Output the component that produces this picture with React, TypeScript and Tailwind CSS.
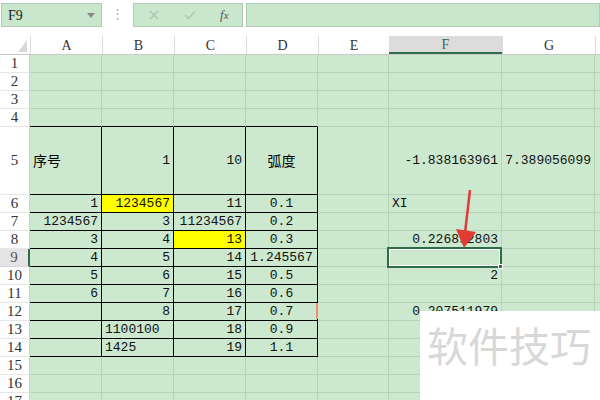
import React from 'react';

type Cell = { t?: string; a?: 'l' | 'r' | 'c'; y?: boolean; zh?: boolean };

const colW = ['w-[72px]', 'w-[72px]', 'w-[72px]', 'w-[72px]', 'w-[71px]', 'w-[113px]', 'w-[93px]', 'flex-1'];
const letters = ['A', 'B', 'C', 'D', 'E', 'F', 'G', ''];

const R = (t: string): Cell => ({ t, a: 'r' });
const L = (t: string): Cell => ({ t, a: 'l' });
const C = (t: string): Cell => ({ t, a: 'c' });

// row number -> cells A..H
const data: Record<number, Cell[]> = {
  5: [{ t: '序号', a: 'l', zh: true }, R('1'), R('10'), { t: '弧度', a: 'c', zh: true }, {}, R('-1.838163961'), R('7.389056099')],
  6: [R('1'), { t: '1234567', a: 'r', y: true }, R('11'), C('0.1'), {}, L('XI')],
  7: [R('1234567'), R('3'), R('11234567'), C('0.2')],
  8: [R('3'), R('4'), { t: '13', a: 'r', y: true }, C('0.3'), {}, R('0.226892803')],
  9: [R('4'), R('5'), R('14'), C('1.245567')],
  10: [R('5'), R('6'), R('15'), C('0.5'), {}, R('2')],
  11: [R('6'), R('7'), R('16'), C('0.6')],
  12: [{}, R('8'), R('17'), C('0.7'), {}, R('0.207511979')],
  13: [{}, L('1100100'), R('18'), C('0.9')],
  14: [{}, L('1425'), R('19'), C('1.1')],
};

function SheetCell({ row, col, cell }: { row: number; col: number; cell?: Cell }) {
  const inTable = row >= 5 && row <= 14 && col <= 3;
  const blackBottom = inTable || (row === 4 && col <= 3);
  const rightCls = inTable ? 'border-r-black' : 'border-r-[#b4d4b8]';
  const bottomCls = blackBottom ? 'border-b-black' : 'border-b-[#b4d4b8]';
  const align = cell?.a === 'r' ? 'justify-end' : cell?.a === 'c' ? 'justify-center' : 'justify-start';
  const bg = cell?.y ? 'bg-[#ffff00]' : 'bg-[#cce8cf]';
  const selected = row === 9 && col === 5;
  return (
    <div className={`${colW[col]} shrink-0 h-full relative flex items-center px-[3px] border-r border-b ${rightCls} ${bottomCls} ${align} ${bg}`}>
      {cell?.t && (
        <span className={cell.zh ? "text-[14px] text-black font-['Noto_Sans_CJK_SC',sans-serif] whitespace-nowrap" : 'text-[13px] text-[#111] whitespace-nowrap'}>
          {cell.t}
        </span>
      )}
      {selected && (
        <div className="absolute -left-[2px] -top-[2px] -right-[1px] -bottom-[2px] border-2 border-[#2f6d48] z-10">
          <div className="w-full h-full border border-white" />
          <div className="absolute -right-[3px] -bottom-[3px] w-[5px] h-[5px] bg-[#2f6d48] border border-white" />
        </div>
      )}
    </div>
  );
}

export default function App() {
  const rows = Array.from({ length: 17 }, (_, i) => i + 1);
  return (
    <div className="w-[600px] h-[400px] overflow-hidden bg-white relative font-['Liberation_Mono',monospace] text-black">
      {/* formula bar */}
      <div className="h-[36px] flex items-start pt-[3px] pl-[1px]">
        <div className="w-[101px] h-[24px] bg-[#c9e7cc] border border-[#b2c9b4] flex items-center justify-between pl-[6px] pr-[6px]">
          <span className="text-[14px] text-[#222] font-['Liberation_Serif',serif]">F9</span>
          <svg width="8" height="5" viewBox="0 0 8 5"><path d="M0 0h8L4 5z" fill="#8a8a8a" /></svg>
        </div>
        <div className="w-[31px] h-[24px] flex items-center justify-center text-[#b0b0b0] text-[13px]">⋮</div>
        <div className="w-[110px] h-[24px] bg-[#c9e7cc] border border-[#b2c9b4] flex items-center">
          <svg className="ml-[15px]" width="10" height="10" viewBox="0 0 10 10"><path d="M1 1l8 8M9 1l-8 8" stroke="#aec4b0" strokeWidth="1.3" /></svg>
          <svg className="ml-[25px]" width="12" height="10" viewBox="0 0 12 10"><path d="M1 5l3.5 3.5L11 1.5" stroke="#aec4b0" strokeWidth="1.4" fill="none" /></svg>
          <span className="ml-[24px] text-[13px] italic text-[#555] font-['Liberation_Serif',serif]">f<span className="text-[11px]">x</span></span>
        </div>
        <div className="ml-[3px] flex-1 h-[24px] bg-[#c9e7cc] border border-[#b2c9b4]" />
      </div>

      {/* column headers */}
      <div className="h-[19px] flex border-b border-[#c8c8c8] font-['Liberation_Serif',serif]">
        <div className="w-[30px] shrink-0 h-full flex items-end justify-end pr-[3px] pb-[2px]">
          <svg width="9" height="12" viewBox="0 0 9 12"><path d="M9 0V12H0z" fill="#d9d9d9" /></svg>
        </div>
        {letters.map((l, i) =>
          i === 5 ? (
            <div key={i} className={`${colW[i]} shrink-0 h-full bg-[#dcdcdc] border-b-2 border-[#2f6d48] flex items-center justify-center text-[14px] text-[#2f6d48]`}>{l}</div>
          ) : (
            <div key={i} className={`${colW[i]} shrink-0 h-full border-l border-[#dcdcdc] flex items-center justify-center text-[14px] text-[#333]`}>{l}</div>
          )
        )}
      </div>

      {/* rows */}
      {rows.map((r) => (
        <div key={r} className={`flex ${r === 5 ? 'h-[68px]' : 'h-[18px]'}`}>
          <div
            className={
              r === 9
                ? "w-[30px] shrink-0 h-full bg-[#e4e4e4] border-r-2 border-r-[#2f6d48] border-b border-b-[#d6d6d6] flex items-center justify-center text-[15px] text-[#555] font-['Liberation_Serif',serif]"
                : "w-[30px] shrink-0 h-full bg-white border-r border-r-[#cfcfcf] border-b border-b-[#e6e6e6] flex items-center justify-center text-[15px] text-[#333] font-['Liberation_Serif',serif]"
            }
          >
            {r}
          </div>
          {colW.map((_, c) => (
            <SheetCell key={c} row={r} col={c} cell={data[r]?.[c]} />
          ))}
        </div>
      ))}

      {/* comment marker */}
      <div className="absolute left-[316px] top-[303px] w-[2px] h-[16px] bg-[#f09070]" />

      {/* red arrow */}
      <svg className="absolute left-0 top-0 pointer-events-none" width="600" height="400">
        <line x1="470" y1="190" x2="465" y2="233" stroke="#e23a35" strokeWidth="2.5" />
        <path d="M456 229 L476 232 L464 248 Z" fill="#e23a35" />
      </svg>

      {/* watermark */}
      <div className="absolute left-[420px] top-[311px] w-[180px] h-[89px] bg-white pl-[7px] pt-[13px]">
        <span className="text-[41px] leading-none text-[#d8d8d8] font-['Noto_Sans_CJK_SC',sans-serif] whitespace-nowrap">软件技巧</span>
      </div>
    </div>
  );
}
